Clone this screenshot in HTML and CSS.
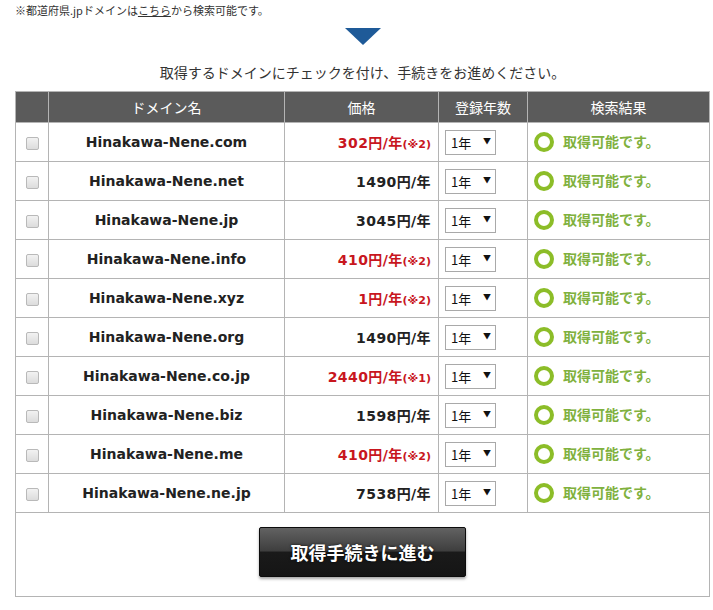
FILE: index.html
```html
<!DOCTYPE html>
<html lang="ja">
<head>
<meta charset="utf-8">
<link rel="stylesheet" href="styles.css">
</head>
<body>
<div class="wrap">
  <p class="note">※都道府県.jpドメインは<a class="link" href="#">こちら</a>から検索可能です。</p>
  <div class="arrow"></div>
  <p class="lead">取得するドメインにチェックを付け、手続きをお進めください。</p>
  <table class="domains">
    <thead>
      <tr>
        <th class="c-chk"></th>
        <th class="c-name">ドメイン名</th>
        <th class="c-price">価格</th>
        <th class="c-year">登録年数</th>
        <th class="c-res">検索結果</th>
      </tr>
    </thead>
    <tbody>
      <tr><td class="c-chk"><span class="chk"></span></td><td class="c-name">Hinakawa-Nene.com</td><td class="c-price red">302円/年<small>(※2)</small></td><td class="c-year"><span class="sel">1年<i>▼</i></span></td><td class="c-res"><span class="ring"></span>取得可能です。</td></tr>
      <tr><td class="c-chk"><span class="chk"></span></td><td class="c-name">Hinakawa-Nene.net</td><td class="c-price">1490円/年</td><td class="c-year"><span class="sel">1年<i>▼</i></span></td><td class="c-res"><span class="ring"></span>取得可能です。</td></tr>
      <tr><td class="c-chk"><span class="chk"></span></td><td class="c-name">Hinakawa-Nene.jp</td><td class="c-price">3045円/年</td><td class="c-year"><span class="sel">1年<i>▼</i></span></td><td class="c-res"><span class="ring"></span>取得可能です。</td></tr>
      <tr><td class="c-chk"><span class="chk"></span></td><td class="c-name">Hinakawa-Nene.info</td><td class="c-price red">410円/年<small>(※2)</small></td><td class="c-year"><span class="sel">1年<i>▼</i></span></td><td class="c-res"><span class="ring"></span>取得可能です。</td></tr>
      <tr><td class="c-chk"><span class="chk"></span></td><td class="c-name">Hinakawa-Nene.xyz</td><td class="c-price red">1円/年<small>(※2)</small></td><td class="c-year"><span class="sel">1年<i>▼</i></span></td><td class="c-res"><span class="ring"></span>取得可能です。</td></tr>
      <tr><td class="c-chk"><span class="chk"></span></td><td class="c-name">Hinakawa-Nene.org</td><td class="c-price">1490円/年</td><td class="c-year"><span class="sel">1年<i>▼</i></span></td><td class="c-res"><span class="ring"></span>取得可能です。</td></tr>
      <tr><td class="c-chk"><span class="chk"></span></td><td class="c-name">Hinakawa-Nene.co.jp</td><td class="c-price red">2440円/年<small>(※1)</small></td><td class="c-year"><span class="sel">1年<i>▼</i></span></td><td class="c-res"><span class="ring"></span>取得可能です。</td></tr>
      <tr><td class="c-chk"><span class="chk"></span></td><td class="c-name">Hinakawa-Nene.biz</td><td class="c-price">1598円/年</td><td class="c-year"><span class="sel">1年<i>▼</i></span></td><td class="c-res"><span class="ring"></span>取得可能です。</td></tr>
      <tr><td class="c-chk"><span class="chk"></span></td><td class="c-name">Hinakawa-Nene.me</td><td class="c-price red">410円/年<small>(※2)</small></td><td class="c-year"><span class="sel">1年<i>▼</i></span></td><td class="c-res"><span class="ring"></span>取得可能です。</td></tr>
      <tr><td class="c-chk"><span class="chk"></span></td><td class="c-name">Hinakawa-Nene.ne.jp</td><td class="c-price">7538円/年</td><td class="c-year"><span class="sel">1年<i>▼</i></span></td><td class="c-res"><span class="ring"></span>取得可能です。</td></tr>
    </tbody>
    <tfoot>
      <tr><td class="foot" colspan="5"><a class="btn" href="#">取得手続きに進む</a></td></tr>
    </tfoot>
  </table>
</div>
</body>
</html>
```
FILE: styles.css
```css
html, body {
  margin: 0;
  padding: 0;
  background: #fff;
}
body {
  font-family: "DejaVu Sans", "Noto Sans CJK JP", sans-serif;
  color: #222;
}
.wrap {
  margin-left: 15px;
  width: 695px;
}
.note {
  margin: 0;
  padding-top: 3px;
  font-size: 11px;
  line-height: 14px;
  color: #333;
  font-family: "Noto Sans CJK JP", sans-serif;
}
.link {
  color: #333;
  text-decoration: underline;
}
.arrow {
  width: 0;
  height: 0;
  margin: 11px auto 0;
  border-left: 18px solid transparent;
  border-right: 18px solid transparent;
  border-top: 17px solid #1e5a98;
}
.lead {
  margin: 17px 0 0;
  text-align: center;
  font-family: "Noto Sans CJK JP", sans-serif;
  font-size: 14px;
  line-height: 20px;
  color: #333;
}
.domains {
  margin-top: 9px;
  width: 695px;
  border-collapse: collapse;
  table-layout: fixed;
}
.domains th {
  background: #5b5b5b;
  color: #fff;
  font-weight: normal;
  font-family: "Noto Sans CJK JP", sans-serif;
  font-size: 14px;
  height: 30px;
  padding: 0;
  border: 1px solid #b4b4b4;
  text-align: center;
}
.domains td {
  height: 38px;
  padding: 0;
  border: 1px solid #b4b4b4;
  vertical-align: middle;
}
.c-chk { width: 32px; text-align: center; }
.c-name { width: 235px; }
.c-price { width: 153px; }
.c-year { width: 88px; }
.domains td.c-name {
  text-align: center;
  font-weight: bold;
  font-size: 14px;
  color: #222;
}
.domains td.c-price {
  text-align: right;
  padding-right: 7px;
  font-weight: bold;
  font-size: 14px;
  letter-spacing: 0.4px;
  color: #222;
}
.domains td.red { color: #c8161e; }
.red small {
  font-size: 11px;
  letter-spacing: 0;
}
.chk {
  display: inline-block;
  width: 11px;
  height: 11px;
  border: 1px solid #b9b9b9;
  border-radius: 2px;
  background: linear-gradient(#f2f2f2, #dcdcdc);
  vertical-align: middle;
}
.domains td.c-year {
  padding-left: 6px;
}
.sel {
  display: flex;
  align-items: center;
  width: 40px;
  height: 23px;
  padding: 0 4px 0 5px;
  border: 1px solid #a9a9a9;
  background: #fff;
  font-family: "Noto Sans CJK JP", sans-serif;
  font-size: 13px;
  color: #111;
  justify-content: space-between;
}
.sel i {
  font-style: normal;
  font-size: 8px;
  position: relative;
  top: -2px;
}
.domains td.c-res {
  padding-left: 6px;
  font-family: "Noto Sans CJK JP", sans-serif;
  font-weight: bold;
  font-size: 14px;
  color: #80b13e;
}
.ring {
  display: inline-block;
  width: 12px;
  height: 12px;
  border: 4px solid #8cbd28;
  border-radius: 50%;
  vertical-align: middle;
  margin-right: 9px;
  position: relative;
  top: -1px;
}
.domains td.foot {
  height: 84px;
  text-align: center;
  vertical-align: top;
  padding-top: 14px;
  box-sizing: border-box;
}
.btn {
  display: inline-flex;
  align-items: center;
  justify-content: center;
  width: 205px;
  height: 48px;
  border: 1px solid #0c0c0c;
  border-radius: 2px;
  background: linear-gradient(#626262 0%, #3e3e3e 48%, #1a1a1a 50%, #151515 100%);
  box-shadow: 0 2px 3px rgba(0,0,0,0.35);
  color: #fff;
  text-decoration: none;
  font-family: "Noto Sans CJK JP", sans-serif;
  font-weight: bold;
  font-size: 18px;
  text-shadow: 0 0 3px rgba(0,0,0,0.8);
}
```
